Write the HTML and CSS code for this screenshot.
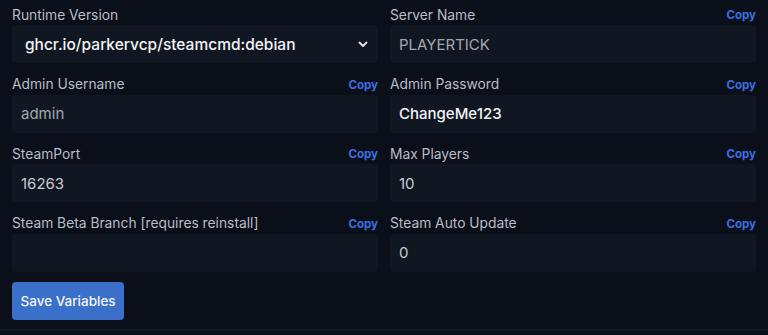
FILE: index.html
```html
<!DOCTYPE html>
<html lang="en">
<head>
  <meta charset="UTF-8" />
  <title>Startup Variables</title>
  <link rel="stylesheet" href="styles.css">
</head>
<body>
  <div class="panel">
    <div class="grid">
      <div class="field">
        <div class="label-row"><label for="runtime">Runtime Version</label></div>
        <div class="select-wrap">
          <select id="runtime" class="input select">
            <option selected>ghcr.io/parkervcp/steamcmd:debian</option>
          </select>
          <svg class="chevron" width="10" height="7" viewBox="0 0 10 7"><path d="M1.5 1.5 L5 5 L8.5 1.5" fill="none" stroke="#e5e7eb" stroke-width="1.8" stroke-linecap="round" stroke-linejoin="round"/></svg>
        </div>
      </div>
      <div class="field">
        <div class="label-row"><label for="servername">Server Name</label><a class="copy">Copy</a></div>
        <input id="servername" class="input muted" value="PLAYERTICK">
      </div>

      <div class="field">
        <div class="label-row"><label for="adminuser">Admin Username</label><a class="copy">Copy</a></div>
        <input id="adminuser" class="input muted" value="admin">
      </div>
      <div class="field">
        <div class="label-row"><label for="adminpass">Admin Password</label><a class="copy">Copy</a></div>
        <input id="adminpass" class="input bright" value="ChangeMe123">
      </div>

      <div class="field">
        <div class="label-row"><label for="steamport">SteamPort</label><a class="copy">Copy</a></div>
        <input id="steamport" class="input" value="16263">
      </div>
      <div class="field">
        <div class="label-row"><label for="maxplayers">Max Players</label><a class="copy">Copy</a></div>
        <input id="maxplayers" class="input" value="10">
      </div>

      <div class="field">
        <div class="label-row"><label for="beta">Steam Beta Branch [requires reinstall]</label><a class="copy">Copy</a></div>
        <input id="beta" class="input" value="">
      </div>
      <div class="field">
        <div class="label-row"><label for="autoupdate">Steam Auto Update</label><a class="copy">Copy</a></div>
        <input id="autoupdate" class="input" value="0">
      </div>
    </div>

    <button class="save">Save Variables</button>
  </div>
</body>
</html>
```

FILE: styles.css
```css
html, body {
  margin: 0;
  height: 100%;
}
body {
  font-family: Inter, 'Noto Sans', sans-serif;
  background: #0b0f1a;
  color: #c4c7cf;
}
.panel {
  padding: 4px 12px 0 12px;
  height: 331px;
  box-sizing: border-box;
  border-bottom: 2px solid #151a26;
}
.grid {
  display: grid;
  grid-template-columns: 1fr 1fr;
  column-gap: 12px;
  row-gap: 10.5px;
}
.label-row {
  display: flex;
  justify-content: space-between;
  align-items: center;
  height: 21px;
}
label {
  font-size: 13.8px;
  color: #b9bdc6;
}
.copy {
  font-size: 11.5px;
  font-weight: 700;
  color: #3b6fe3;
  cursor: pointer;
  padding-top: 1px;
}
.input {
  display: block;
  width: 100%;
  height: 38px;
  box-sizing: border-box;
  background: #111722;
  border: none;
  border-radius: 4px;
  padding: 0 9px;
  font-family: inherit;
  font-size: 15px;
  color: #c9ccd3;
  outline: none;
}
.muted {
  color: #a3a7b0;
}
.bright {
  color: #f3f4f6;
  font-weight: 500;
}
.select-wrap {
  position: relative;
}
.select {
  appearance: none;
  -webkit-appearance: none;
  padding-left: 13px;
  font-size: 15.5px;
  font-weight: 500;
  color: #f3f4f6;
}
.chevron {
  position: absolute;
  right: 10px;
  top: 16px;
  pointer-events: none;
}
.save {
  margin-top: 10px;
  background: #3a6fca;
  color: #f3f6fb;
  border: none;
  border-radius: 4px;
  height: 38px;
  padding: 0 8.5px;
  font-family: inherit;
  font-size: 13.5px;
  font-weight: 500;
}
```
